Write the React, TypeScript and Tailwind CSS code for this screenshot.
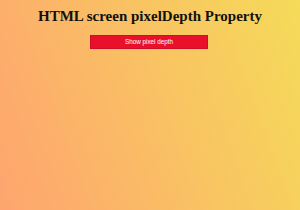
export default function App() {
  return (
    <div className="min-h-screen w-full bg-[linear-gradient(70deg,#fea46f,#f5db59)] flex flex-col items-center">
      <h1 className="mt-[7px] text-[15px] leading-[18px] font-bold text-[#111] font-['Liberation_Serif',serif]">
        HTML screen pixelDepth Property
      </h1>
      <button className="mt-[10px] ml-[-2px] w-[118px] h-[14px] bg-[#e8102b] border border-[#d20c26] text-white text-[6.3px] leading-none font-['Liberation_Sans',sans-serif] flex items-center justify-center">
        Show pixel depth
      </button>
    </div>
  );
}
